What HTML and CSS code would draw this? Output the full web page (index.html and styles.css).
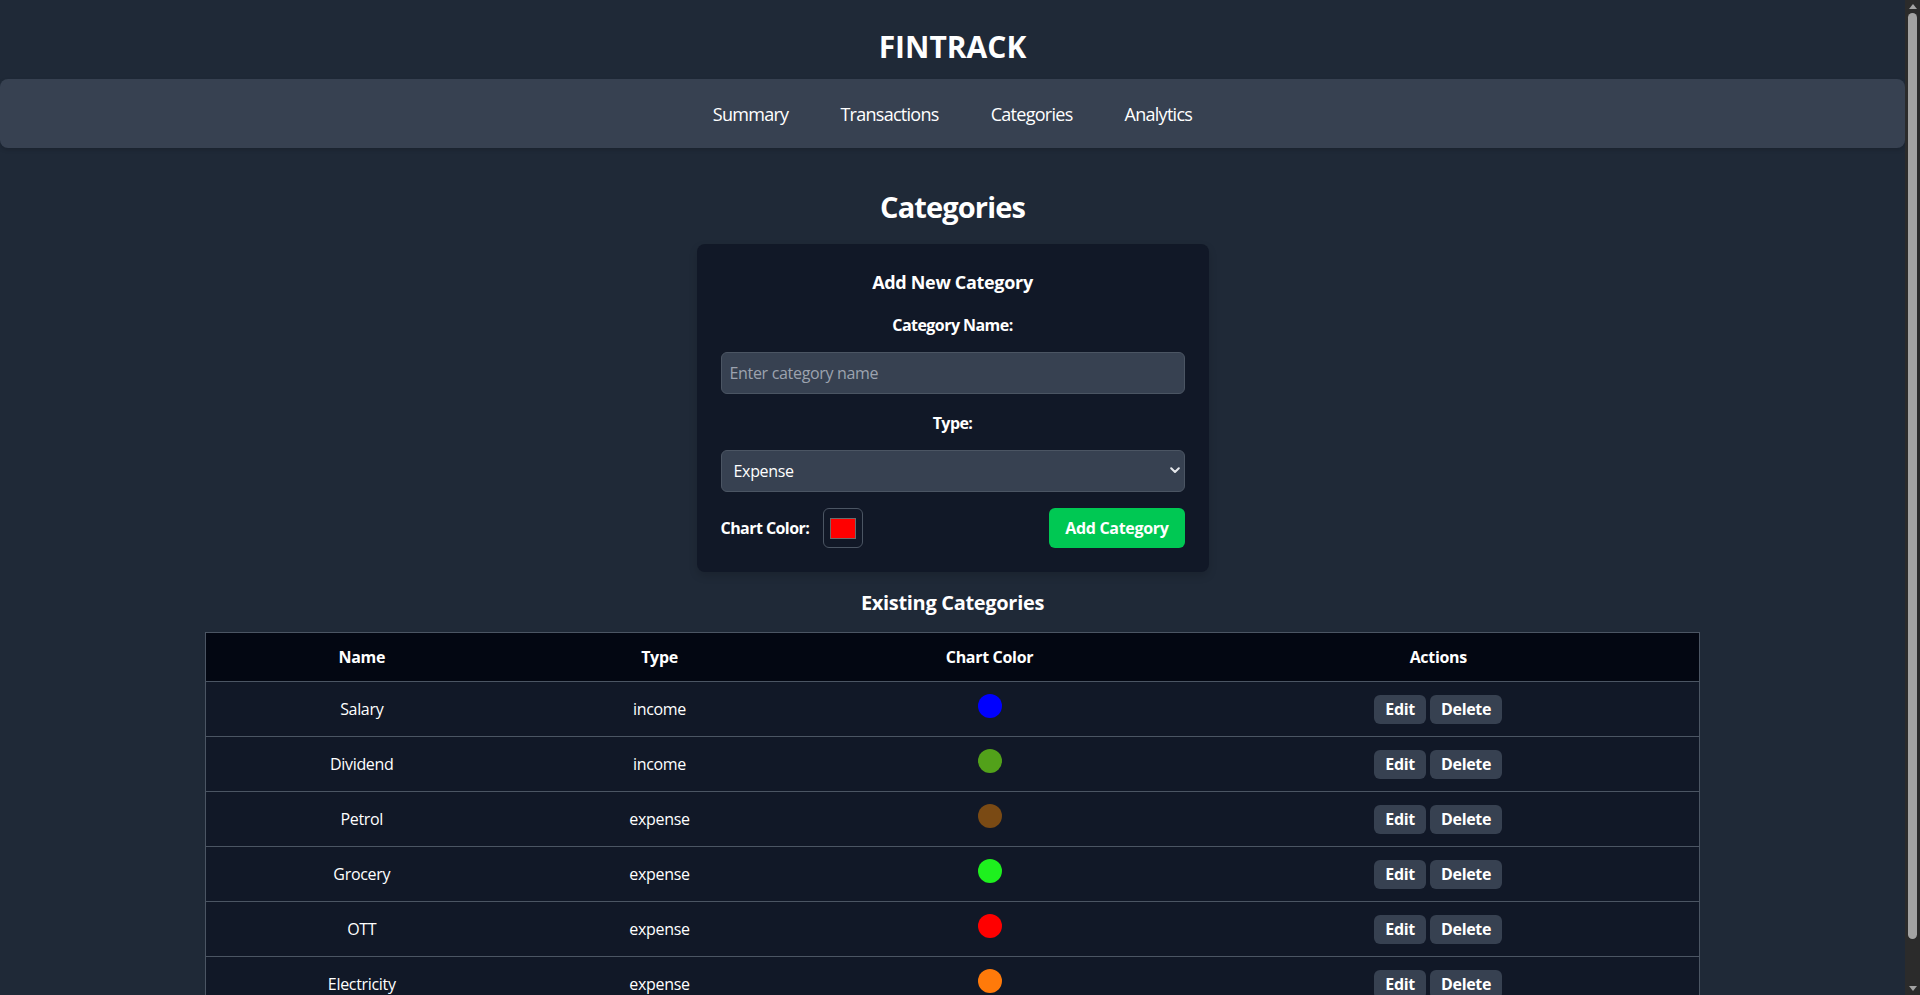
FILE: index.html
```html
<!DOCTYPE html>
<html lang="en">
<head>
<meta charset="utf-8">
<title>FinTrack - Categories</title>
<link rel="stylesheet" href="styles.css">
</head>
<body>
<div class="page">
<header class="site-header">
  <h1 class="brand">FINTRACK</h1>
</header>
<nav class="main-nav">
  <a href="#" class="nav-link">Summary</a>
  <a href="#" class="nav-link">Transactions</a>
  <a href="#" class="nav-link">Categories</a>
  <a href="#" class="nav-link">Analytics</a>
</nav>
<main class="content">
  <h2 class="page-title">Categories</h2>
  <form class="card">
    <h3 class="card-title">Add New Category</h3>
    <label class="field-label" for="cat-name">Category Name:</label>
    <input id="cat-name" class="text-input" type="text" placeholder="Enter category name">
    <label class="field-label field-label-gap" for="cat-type">Type:</label>
    <div class="select-wrap">
      <select id="cat-type" class="select-input">
        <option>Expense</option>
        <option>Income</option>
      </select>
      <svg class="select-arrow" viewBox="0 0 10 7" width="10" height="7" aria-hidden="true"><path d="M1.2 1.2 L5 5 L8.8 1.2" fill="none" stroke="#e5e7eb" stroke-width="2" stroke-linecap="round" stroke-linejoin="round"/></svg>
    </div>
    <div class="color-row">
      <div class="color-field">
        <span class="color-label">Chart Color:</span>
        <span class="swatch-box"><span class="swatch-fill"></span></span>
      </div>
      <button type="button" class="btn-add">Add Category</button>
    </div>
  </form>

  <h3 class="section-title">Existing Categories</h3>
  <table class="cat-table">
    <colgroup>
      <col class="col-name"><col class="col-type"><col class="col-color"><col class="col-actions">
    </colgroup>
    <thead>
      <tr><th>Name</th><th>Type</th><th>Chart Color</th><th>Actions</th></tr>
    </thead>
    <tbody>
      <tr><td>Salary</td><td>income</td><td><span class="dot" style="background:#0000ff"></span></td><td><button class="btn-sm">Edit</button><button class="btn-sm">Delete</button></td></tr>
      <tr><td>Dividend</td><td>income</td><td><span class="dot" style="background:#52a11a"></span></td><td><button class="btn-sm">Edit</button><button class="btn-sm">Delete</button></td></tr>
      <tr><td>Petrol</td><td>expense</td><td><span class="dot" style="background:#7a4a14"></span></td><td><button class="btn-sm">Edit</button><button class="btn-sm">Delete</button></td></tr>
      <tr><td>Grocery</td><td>expense</td><td><span class="dot" style="background:#1ef01e"></span></td><td><button class="btn-sm">Edit</button><button class="btn-sm">Delete</button></td></tr>
      <tr><td>OTT</td><td>expense</td><td><span class="dot" style="background:#ff0000"></span></td><td><button class="btn-sm">Edit</button><button class="btn-sm">Delete</button></td></tr>
      <tr><td>Electricity</td><td>expense</td><td><span class="dot" style="background:#ff7a0a"></span></td><td><button class="btn-sm">Edit</button><button class="btn-sm">Delete</button></td></tr>
    </tbody>
  </table>
</main>
</div>
<div class="scrollbar" aria-hidden="true">
  <div class="sb-arrow"><svg viewBox="0 0 8 5" width="8" height="5"><path d="M0 5 L4 0 L8 5 Z" fill="#a3a3a3"/></svg></div>
  <div class="sb-thumb"></div>
  <div class="sb-space"></div>
  <div class="sb-arrow"><svg viewBox="0 0 8 5" width="8" height="5"><path d="M0 0 L8 0 L4 5 Z" fill="#a3a3a3"/></svg></div>
</div>
</body>
</html>
```

FILE: styles.css
```css
* { box-sizing: border-box; }
html, body {
  height: 100%;
  margin: 0;
  overflow: hidden;
}
body {
  display: flex;
  background: #1f2937;
  color: #ffffff;
  font-family: "Open Sans", "Noto Sans", sans-serif;
  font-size: 16px;
  line-height: 24px;
  letter-spacing: -0.02em;
}
.page {
  flex: 1;
  min-width: 0;
  height: 100vh;
  overflow: hidden;
}
.scrollbar {
  flex: none;
  width: 15px;
  height: 100vh;
  background: #2b2b2b;
  display: flex;
  flex-direction: column;
  align-items: center;
}
.sb-arrow {
  height: 13px;
  display: flex;
  align-items: center;
  justify-content: center;
}
.sb-thumb {
  width: 9px;
  height: 926px;
  border-radius: 5px;
  background: #a3a3a3;
}
.sb-space { flex: 1; }
.site-header {
  padding: 29px 0 14px;
  text-align: center;
}
.brand {
  margin: 0;
  font-size: 30px;
  line-height: 36px;
  font-weight: 700;
  letter-spacing: 0;
}
.main-nav {
  background: #374151;
  border-radius: 8px;
  display: flex;
  justify-content: center;
  gap: 52px;
  padding: 21px 0 20px;
  box-shadow: 0 2px 4px rgba(0,0,0,0.15);
}
.nav-link {
  color: #ffffff;
  text-decoration: none;
  font-size: 18px;
  line-height: 28px;
  letter-spacing: -0.04em;
}
.content {
  display: flex;
  flex-direction: column;
  align-items: center;
}
.page-title {
  margin: 41px 0 19px;
  font-size: 29px;
  line-height: 36px;
  font-weight: 700;
  letter-spacing: -0.03em;
}
.card {
  width: 512px;
  background: #111827;
  border-radius: 8px;
  padding: 24px;
  display: flex;
  flex-direction: column;
  box-shadow: 0 4px 8px rgba(0,0,0,0.15);
}
.card-title {
  margin: 0 0 17px;
  text-align: center;
  font-size: 18px;
  line-height: 28px;
  font-weight: 700;
}
.field-label {
  text-align: center;
  font-weight: 700;
  margin-bottom: 15px;
  letter-spacing: -0.035em;
}
.field-label-gap { margin-top: 17px; }
.text-input,
.select-input {
  width: 100%;
  background: #374151;
  border: 1px solid #4b5563;
  border-radius: 6px;
  color: #ffffff;
  font-family: inherit;
  font-size: 16px;
  letter-spacing: -0.02em;
  outline: none;
}
.text-input { height: 42px; padding: 0 8px; }
.text-input::placeholder { color: #9ca3af; }
.select-wrap { position: relative; }
.select-input {
  height: 42px;
  -webkit-appearance: none;
  appearance: none;
  padding: 0 12px;
}
.select-arrow {
  position: absolute;
  right: 5px;
  top: 17px;
  pointer-events: none;
}
.color-row {
  margin-top: 16px;
  display: flex;
  justify-content: space-between;
  align-items: center;
}
.color-field {
  display: flex;
  align-items: center;
  gap: 14px;
}
.color-label { font-weight: 700; letter-spacing: -0.035em; }
.swatch-box {
  width: 40px;
  height: 40px;
  border: 1px solid #4b5563;
  border-radius: 6px;
  display: flex;
  align-items: center;
  justify-content: center;
}
.swatch-fill {
  width: 26px;
  height: 21px;
  background: #ff0000;
  border: 1px solid #6b6b6b;
}
.btn-add {
  background: #00c853;
  color: #ffffff;
  border: 0;
  border-radius: 6px;
  height: 40px;
  padding: 0 16px;
  font-family: inherit;
  font-size: 16px;
  font-weight: 700;
  letter-spacing: -0.02em;
  white-space: nowrap;
}
.section-title {
  margin: 17px 0 15px;
  font-size: 20px;
  line-height: 28px;
  font-weight: 700;
}
.cat-table {
  width: 1495px;
  border-collapse: collapse;
  border: 1px solid #4b5563;
  background: #111827;
}
.col-name { width: 312px; }
.col-type { width: 284px; }
.col-color { width: 376px; }
.col-actions { width: 522px; }
.cat-table th {
  background: #030712;
  font-weight: 700;
  padding: 12px 16px;
  line-height: 24px;
  text-align: center;
}
.cat-table td {
  padding: 0 16px;
  height: 55px;
  text-align: center;
  border-top: 1px solid #4b5563;
  line-height: 24px;
}
.dot {
  display: inline-block;
  width: 24px;
  height: 24px;
  border-radius: 50%;
  vertical-align: middle;
  margin-bottom: 6px;
}
.btn-sm {
  background: #374151;
  color: #ffffff;
  border: 0;
  border-radius: 6px;
  height: 29px;
  padding: 0 11px;
  margin: 0 2px;
  font-family: inherit;
  font-size: 16px;
  font-weight: 700;
  letter-spacing: -0.02em;
  vertical-align: middle;
}
```
